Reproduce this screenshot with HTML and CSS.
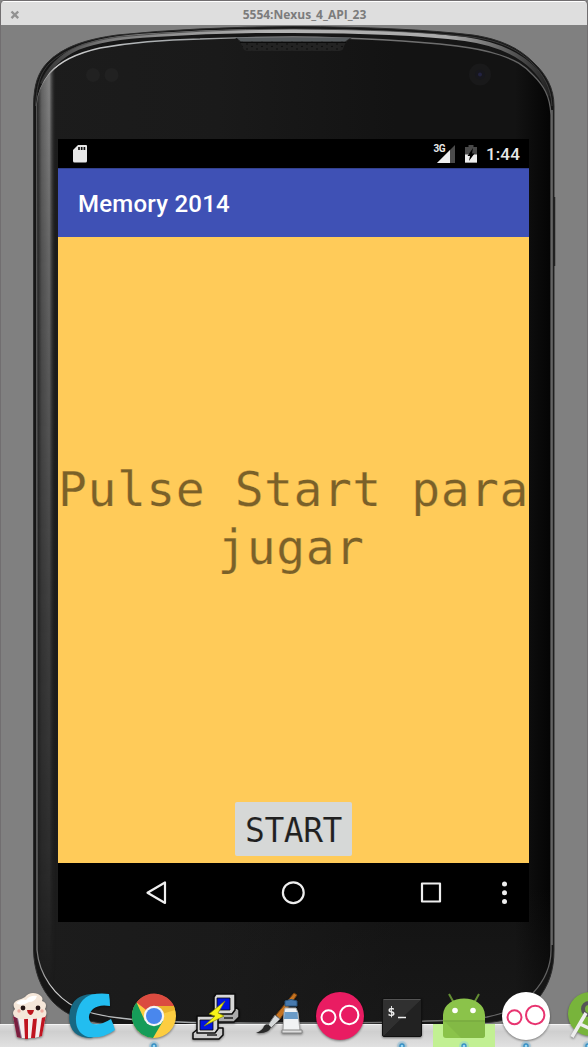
FILE: index.html
```html
<!DOCTYPE html>
<html lang="es">
<head>
<meta charset="utf-8">
<title>5554:Nexus_4_API_23</title>
<link rel="stylesheet" href="styles.css">
</head>
<body>
<div class="window">
  <header class="titlebar">
    <svg class="close" viewBox="0 0 10 10"><path d="M1.5 1.5L8.2 8.2M8.2 1.5L1.5 8.2"/></svg>
    <span class="window-title">5554:Nexus_4_API_23</span>
  </header>
  <main class="emulator">
    <svg class="device" viewBox="0 25 588 1022">
      <defs>
        <linearGradient id="face" x1="0" x2="1"><stop offset="0" stop-color="#1c1c1c"/><stop offset=".35" stop-color="#1a1a1a"/><stop offset=".7" stop-color="#131313"/><stop offset=".93" stop-color="#131313"/><stop offset="1" stop-color="#040404"/></linearGradient>
        <linearGradient id="facebottom" x1="0" y1="0" x2="0" y2="1"><stop offset=".4" stop-color="#1b1b1b" stop-opacity="0"/><stop offset="1" stop-color="#1b1b1b" stop-opacity=".6"/></linearGradient>
        <linearGradient id="side" x1="0" x2="1"><stop offset="0" stop-color="#222"/><stop offset=".25" stop-color="#666"/><stop offset=".65" stop-color="#858585"/><stop offset="1" stop-color="#1b1b1b" stop-opacity="0"/></linearGradient>
        <linearGradient id="sidefade" x1="0" y1="0" x2="0" y2="1"><stop offset="0" stop-color="#fff"/><stop offset=".2" stop-color="#bbb"/><stop offset=".6" stop-color="#555"/><stop offset=".85" stop-color="#2c2c2c"/><stop offset="1" stop-color="#000"/></linearGradient>
        <linearGradient id="metal" x1="0" x2="1"><stop offset="0" stop-color="#333"/><stop offset=".12" stop-color="#777"/><stop offset=".45" stop-color="#b4b4b4"/><stop offset=".8" stop-color="#aaa"/><stop offset=".93" stop-color="#555"/><stop offset="1" stop-color="#222"/></linearGradient>
        <linearGradient id="rim" x1="0" y1="0" x2="1" y2="0"><stop offset="0" stop-color="#777"/><stop offset=".03" stop-color="#d0d0d0"/><stop offset=".2" stop-color="#b0b4b6"/><stop offset=".6" stop-color="#777"/><stop offset="1" stop-color="#606060"/></linearGradient>
        <mask id="sidemask" maskUnits="userSpaceOnUse" x="30" y="60" width="40" height="930"><rect x="30" y="60" width="40" height="930" fill="url(#sidefade)"/></mask>
        <pattern id="holes" width="10" height="5" patternUnits="userSpaceOnUse"><rect width="10" height="5" fill="#232323"/><circle cx="2" cy="1.500" r=".8" fill="#080808"/><circle cx="7" cy="4" r=".8" fill="#080808"/></pattern>
        <clipPath id="inside"><path d="M37 104C38 92 42 83 50 73C61 60 78 53 100 48Q145 40 200 39V1022H120C100 1016 87 1013 77 1008C55 997 39 975 37 950Z"/></clipPath>
      </defs>
      <path d="M33.500 105C34 84 38 73 47 63C63 46 88 39 117 35Q195 27 293 26.500Q405 27 473 35C500 39 519 48 533 62C546 74 554 88 554 106V950C554 970 549 986 537 1000C525 1014 510 1020 493 1022Q430 1028 293 1028Q155 1028 110 1024C80 1021 66 1015 53 1002C40 988 34 970 33.500 950Z" fill="#161616" stroke="#2b2b2b"/>
      <path d="M42 84C48 69 58 57 78 48C100 39 135 36 155 35Q225 30.500 293 31Q400 31 465 39C515 46 543 69 549 96" fill="none" stroke="url(#metal)" stroke-width="4"/>
      <path d="M35.500 106C37 84 40 74 49 64C65 48 90 41 118 37Q196 29.500 293 29Q405 29.500 472 37C500 41 517 49 531 62C544 75 551 88 552 106" fill="none" stroke="#444" stroke-width=".8"/>
      <path d="M37 104C38 92 42 83 50 73C61 60 78 53 100 48Q145 40 200 39Q245 37 293 37Q390 38 457 46Q482 49 500 55C515 60 524 65 533 75C543 85 550 95 551 115V950C551 967 545 980 533 993C521 1007 507 1013 487 1017Q440 1023 293 1023Q165 1024 120 1018Q93 1015 77 1008C55 997 39 975 37 950Z" fill="url(#face)" stroke="url(#rim)" stroke-width="1.300"/>
      <path d="M38 800H550V950C550 967 544 980 532 993C520 1006 507 1012 487 1016Q440 1022 293 1022Q165 1022 120 1017Q93 1014 78 1007C56 996 40 975 38 950Z" fill="url(#facebottom)"/>
      <g clip-path="url(#inside)"><rect x="37" y="60" width="19" height="930" fill="url(#side)" mask="url(#sidemask)"/></g>
      <path d="M552 110V945" stroke="#707070" stroke-width="1.500"/>
      <path d="M554.500 197V266" stroke="#222" stroke-width="1.500"/>
      <path d="M235 38H352C347 40 345 43 343 49Q342 51 337 51H248Q244 51 243 48Q240 40 235 38Z" fill="url(#holes)"/>
      <path d="M236 37.500H351L345 41.500H241Z" fill="#565b5e"/>
      <path d="M240 42.500H346" stroke="#0b0b0b"/>
      <circle cx="93" cy="75" r="7" fill="#212121"/><circle cx="111.500" cy="75" r="7" fill="#212121"/>
      <circle cx="480" cy="74.500" r="11" fill="#19191a"/><circle cx="480" cy="74.500" r="5" fill="#17171d"/><circle cx="480" cy="74.500" r="2" fill="#222240"/>
    </svg>
    <section class="screen">
      <div class="statusbar">
        <svg class="sd" viewBox="0 0 14 18"><path d="M5 0H13Q14 0 14 1V16Q14 17.500 12.500 17.500H1.500Q0 17.500 0 16V5Z" fill="#e8e8e8"/><path d="M6 2v3M8.700 2v3M11.400 2v3" stroke="#111" stroke-width="1.700"/></svg>
        <span class="status-right">
          <span class="net">3G</span>
          <svg class="signal" viewBox="0 0 18 18"><path d="M18 0V18H0Z" fill="#4b4b4b"/><path d="M13 5V18H0Z" fill="#eee"/></svg>
          <svg class="battery" viewBox="0 0 12 18"><path d="M3.500 0H8.500V2H12V18H0V2H3.500Z" fill="#494949"/><path d="M0 9.500H12V17.500H0Z" fill="#eee"/><path d="M8 3L2.500 11H5L4 16L9.500 8.500H7Z" fill="#000"/></svg>
          <span class="clock">1:44</span>
        </span>
      </div>
      <div class="appbar">Memory 2014</div>
      <div class="content">
        <p class="message">Pulse Start para<br><span class="message-end">jugar</span></p>
        <button class="start">START</button>
      </div>
      <nav class="navbar">
        <svg viewBox="58 863 471 59"><g fill="none" stroke="#eee" stroke-width="2.200" stroke-linejoin="round"><path d="M165 882.500V903L147.500 892.700Z"/><circle cx="293.300" cy="892.700" r="10.400"/><rect x="422" y="883.500" width="18" height="18"/></g><g fill="#eee"><circle cx="504.500" cy="884" r="2.500"/><circle cx="504.500" cy="892.700" r="2.500"/><circle cx="504.500" cy="901.500" r="2.500"/></g></svg>
      </nav>
    </section>
  </main>
</div>
<div class="shelf"></div>
<div class="dock">
  <svg class="app" viewBox="0 0 62 56">
    <path d="M14 25L47 24L43 45Q31 49 18 46Z" fill="#f5eeee"/><path d="M14 25L18 27L22 47L18 46ZM25 27L29 28V48H26ZM34 28L38 27L36 47H32ZM43 26L47 24L43 45L40 46Z" fill="#c01420"/><path d="M14 25L19 27L23 47L18 46Z" fill="#4a2455" opacity=".6"/>
    <path d="M16 26Q12 22 16 18Q12 12 19 9Q23 8 26 6Q31 0 39 3Q45 6 43 10Q49 12 46 18Q49 22 46 26Q38 29 31 27Q22 30 16 26Z" fill="#f5e7d9"/><path d="M17 12Q22 7 27 9Q31 4 38 5Q36 11 30 11Q22 16 17 12" fill="#fff"/>
    <circle cx="24" cy="17" r="2.400" fill="#251615"/><circle cx="39" cy="17" r="2.400" fill="#251615"/><path d="M28 19H35Q34 24 31 24Q28 22 28 19Z" fill="#bd151c"/><circle cx="20" cy="20" r="1.700" fill="#efaa9f"/><circle cx="43" cy="20" r="1.700" fill="#efaa9f"/>
  </svg>
  <svg class="app" viewBox="0 0 62 56">
    <path d="M43 3L30 3Q13 4 9 19Q6 34 14 42Q20 47 30 47L40 43L28 35Q20 31 26 20Z" fill="#176883"/>
    <path d="M48 3Q49 9 49 15Q38 13 32 18Q25 25 30 32Q37 36 50 28Q52 32 54 39Q42 48 27 46Q14 42 15 26Q17 8 31 3.500Q39 2 48 3Z" fill="#22bdf0"/>
  </svg>
  <svg class="app" viewBox="0 0 62 56">
    <circle cx="31" cy="25" r="22" fill="#fdcd40"/><path d="M31 25L13.500 11.500A22 22 0 0 1 51 15H31Z" fill="#db4b40"/><path d="M13.500 11.500A22 22 0 0 0 30 47L40 30L22 30Z" fill="#169c59"/><path d="M31 15H51L52 19L39 23Z" fill="#ecb42d"/><circle cx="31" cy="25" r="10.200" fill="#f5f5f5"/><circle cx="31" cy="25" r="8" fill="#4987ed"/><g class="running"><circle cx="31" cy="55" r="5"/><circle cx="31" cy="55" r="2"/></g>
  </svg>
  <svg class="app" viewBox="0 0 62 56">
    <g stroke="#0b0b0b" stroke-width="1.500" stroke-linejoin="round"><path d="M30 20L52 17L54 19V26L49 31H26V23Z" fill="#aaa"/><path d="M31 3H50V19L47 23H29V6Z" fill="#d6d6d6"/><path d="M32 7H45V19H32Z" fill="#0014df" stroke-width=".8"/><path d="M8 42L14 37H38V44L34 48H8Z" fill="#ccc"/><path d="M12 25H33V38L30 42H12Z" fill="#d6d6d6"/><path d="M15 29H28V39H15Z" fill="#0014df" stroke-width=".8"/></g>
    <path d="M40 10L24 23L30 25L19 35L39 25L33 22Z" fill="#f7f417" stroke="#888800" stroke-width=".7"/><path d="M22 44H32M39 27H48" stroke="#222" stroke-width="1.500"/>
  </svg>
  <svg class="app" viewBox="0 0 62 56">
    <path d="M29 24L47 2L50 4L33 28Z" fill="#c57320" stroke="#75400f"/><path d="M21 34L28 24L33 28L24 37Z" fill="#d6d9da" stroke="#777"/><path d="M9 42Q16 39 17 35Q20 31 24 36Q22 43 9 42Z" fill="#292929"/>
    <path d="M38 17H49L51 22L53 40H36L37 22Z" fill="#f1f3f4" stroke="#aaa"/><path d="M38 10Q44 7 50 10V15H38Z" fill="#4679ae" stroke="#28557f"/><path d="M37.500 21H50.500L51 28H37Z" fill="#6a9bc7"/><path d="M35 39H55V42H35Z" fill="#ddd" stroke="#888"/>
  </svg>
  <svg class="app" viewBox="0 0 62 56"><circle cx="31" cy="25" r="24" fill="#e91c62"/><g fill="none" stroke="#fff" stroke-width="2"><circle cx="19.500" cy="26.300" r="7"/><circle cx="40.200" cy="24" r="9.200"/></g></svg>
  <svg class="app" viewBox="0 0 62 56"><defs><linearGradient id="term" x2="1" y2="1"><stop stop-color="#303030"/><stop offset=".5" stop-color="#303030"/><stop offset=".51" stop-color="#222"/></linearGradient></defs><rect x="11.500" y="7.500" width="39" height="38" rx="1.500" fill="url(#term)" stroke="#111"/><path d="M12.500 8.500H49.500" stroke="#555"/><text x="16.500" y="24.500" class="prompt">$</text><path d="M27 26.500H35" stroke="#eee" stroke-width="1.500"/><g class="running"><circle cx="31" cy="55" r="5"/><circle cx="31" cy="55" r="2"/></g></svg>
  <svg class="app active" viewBox="0 0 62 56"><rect y="33" width="62" height="23" fill="#c2f093"/><path d="M16 3L21 12M46 3L41 12" stroke="#638d33" stroke-width="2"/><path d="M10 30V24C11 2 51 2 52 24V44Q52 47 49 47H13Q10 47 10 44Z" fill="#8bc34a"/><path d="M10 29H52V44Q52 47 49 47H28Z" fill="#83b945"/><path d="M10 30H52" stroke="#719e3d" stroke-width=".8"/><circle cx="22" cy="19.500" r="2.800" fill="#fff"/><circle cx="40" cy="19.500" r="2.800" fill="#fff"/><g class="running"><circle cx="31" cy="55" r="5"/><circle cx="31" cy="55" r="2"/></g></svg>
  <svg class="app" viewBox="0 0 62 56"><circle cx="31" cy="25" r="24" fill="#fff"/><g fill="none" stroke="#e83470" stroke-width="2"><circle cx="19.500" cy="26.300" r="7"/><circle cx="40.200" cy="24" r="9.200"/></g><g class="running"><circle cx="31" cy="55" r="5"/><circle cx="31" cy="55" r="2"/></g></svg>
  <svg class="app" viewBox="0 0 62 56"><circle cx="33" cy="23" r="22" fill="#78b43b"/><circle cx="32" cy="18" r="6" fill="none" stroke="#555" stroke-width="4"/><path d="M29 22L15 46M23 33L38 40" stroke="#eee" stroke-width="3.500"/><g class="running"><circle cx="31" cy="55" r="5"/><circle cx="31" cy="55" r="2"/></g></svg>
</div>
</body>
</html>
```
FILE: styles.css
```css
* { box-sizing: border-box; }
html { overflow: hidden; }
body { margin: 0; height: 1047px; overflow: hidden; position: relative; background: #858585; font-family: Roboto, sans-serif; }
.window { height: 1047px; display: flex; flex-direction: column; border: 1px solid #716e70; border-bottom: 0; border-radius: 5px 5px 0 0; background: #808080; overflow: hidden; }
.titlebar { flex: 0 0 24px; display: flex; align-items: center; background: #dedede; border-top: 1px solid #fff; }
.close { width: 10px; height: 10px; margin: 2px 0 0 9px; }
.close path { stroke: #929292; stroke-width: 2.4; }
.window-title { flex: 1; padding: 3px 0 0 2px; text-align: center; font: bold 12px/16px "Open Sans", sans-serif; letter-spacing: 0; color: #7c7c7c; }
.emulator { flex: 1; position: relative; padding: 114px 0 0 57px; }
.device { position: absolute; left: -1px; top: 0; width: 588px; height: 1022px; }
.screen { position: relative; width: 471px; height: 783px; display: flex; flex-direction: column; background: #000; }
.statusbar { height: 29px; padding: 0 9px 0 15px; display: flex; justify-content: space-between; align-items: center; color: #e8e8e8; }
.sd { width: 14px; height: 18px; }
.status-right { display: flex; align-items: center; }
.net { align-self: flex-start; margin: 5px -8px 0 0; font: bold 10px/11px Roboto, sans-serif; letter-spacing: -0.6px; }
.signal { width: 18px; height: 18px; margin-right: 10px; }
.battery { width: 12px; height: 18px; margin-right: 9px; }
.clock { font: 500 17px/29px Roboto, sans-serif; padding-top: 2px; letter-spacing: 0.15px; }
.appbar { height: 69px; padding: 3px 0 0 20px; border-top: 1px solid #33418f; background: #3f51b5; color: #fff; font: 500 24px/65px Roboto, sans-serif; letter-spacing: 0.24px; }
.content { height: 626px; padding: 223px 0 7px; display: flex; flex-direction: column; align-items: center; justify-content: space-between; background: #ffcb59; }
.message { margin: 0; white-space: nowrap; text-align: center; color: #7a6129; font: 48px/58px "DejaVu Sans Mono", monospace; letter-spacing: 0.53px; -webkit-text-stroke: 0.25px #ffcb59; }
.message-end { padding-right: 5px; }
.start { width: 117px; height: 54px; border: 0; border-radius: 2px; padding: 4px 0 0; background: #d6d8d7; color: #202020; font: 33px/50px "DejaVu Sans Mono", monospace; letter-spacing: -0.5px; -webkit-text-stroke: 0.2px #d6d8d7; }
.navbar { height: 59px; }
.navbar svg { display: block; width: 471px; height: 59px; }
.shelf { position: absolute; left: 0; right: 0; bottom: 0; height: 23px; background: linear-gradient(#dedede, #cfcfcf 30%, #e1e1e1); border-top: 1px solid #f4f4f4; }
.dock { position: absolute; left: 0; right: 0; bottom: 0; display: flex; overflow: hidden; }
.app { width: 62px; height: 56px; flex: none; filter: drop-shadow(0 1px 1px rgba(0, 0, 0, 0.45)); }
.app:first-child { margin-left: -1px; }
.app.active { filter: none; }
.running circle:first-child { fill: #78c6ee; opacity: 0.35; }
.running circle:last-child { fill: #98d8f5; stroke: #358fc5; stroke-width: 1.3; }
.prompt { font: bold 13px "DejaVu Sans Mono", monospace; fill: #eee; }
```
